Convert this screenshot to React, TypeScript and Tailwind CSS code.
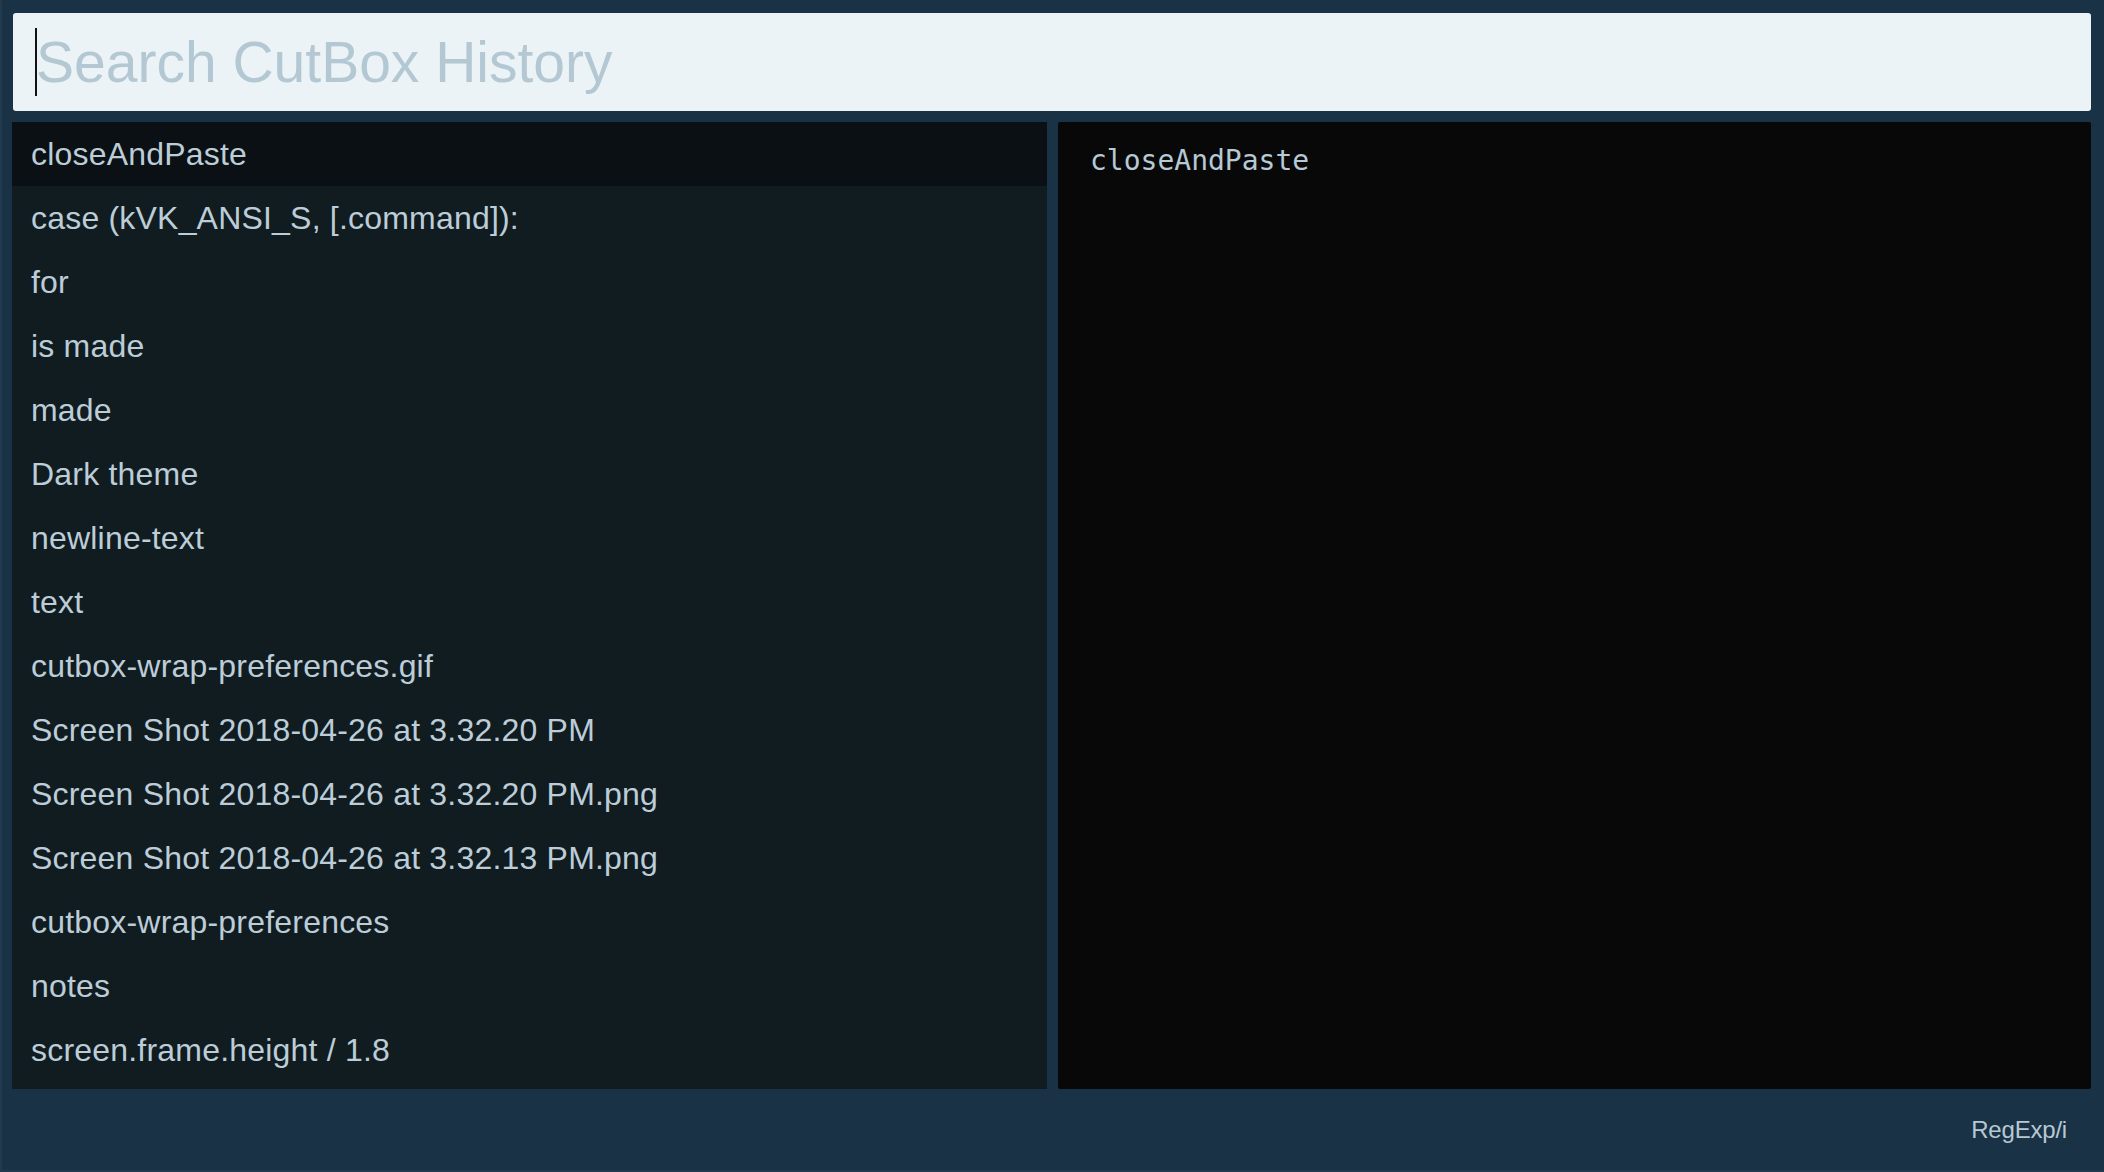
const items = [
  "closeAndPaste",
  "case (kVK_ANSI_S, [.command]):",
  "for",
  "is made",
  "made",
  "Dark theme",
  "newline-text",
  "text",
  "cutbox-wrap-preferences.gif",
  "Screen Shot 2018-04-26 at 3.32.20 PM",
  "Screen Shot 2018-04-26 at 3.32.20 PM.png",
  "Screen Shot 2018-04-26 at 3.32.13 PM.png",
  "cutbox-wrap-preferences",
  "notes",
  "screen.frame.height / 1.8",
];

export default function App() {
  const selected = 0;

  return (
    <div className="w-[2104px] h-[1172px] bg-[#1a3245] flex flex-col overflow-hidden border-l-2 border-b-2 border-[#213a4d] font-['Liberation_Sans',Arial,sans-serif]">
      <div className="flex flex-col flex-1 pt-[13px] pr-[13px] pl-[10px] gap-[11px] min-h-0">
        {/* search field */}
        <div className="h-[98px] ml-px shrink-0 rounded-[3px] bg-[#ebf3f7] flex items-center pl-[22px]">
          <span className="w-[2px] h-[68px] bg-[#111] -mr-[1px] self-center" />
          <span className="text-[57px] leading-none text-[#b4c8d3]">
            Search CutBox History
          </span>
        </div>

        <div className="flex gap-[11px] h-[967px] shrink-0">
          {/* results list */}
          <div className="w-[1035px] bg-[#111c21] overflow-hidden">
            {items.map((item, i) => (
              <div
                key={i}
                className={
                  "h-[64px] flex items-center pl-[19px] text-[32px] tracking-[0.2px] text-[#bccdd8] whitespace-nowrap " +
                  (i === selected ? "bg-[#0a1014]" : "")
                }
              >
                {item}
              </div>
            ))}
          </div>

          {/* preview */}
          <div className="flex-1 bg-[#080808] rounded-[2px] pt-[22px] pl-[32px] pr-[33px]">
            <pre className="font-['DejaVu_Sans_Mono',Menlo,monospace] text-[28px] leading-[33px] text-[#b6c9d5]">
              closeAndPaste
            </pre>
          </div>
        </div>
      </div>

      <div className="h-[81px] shrink-0 flex items-center justify-end pr-[37px]">
        <span className="text-[24px] text-[#b6c8d3] tracking-[-0.2px]">RegExp/i</span>
      </div>
    </div>
  );
}
